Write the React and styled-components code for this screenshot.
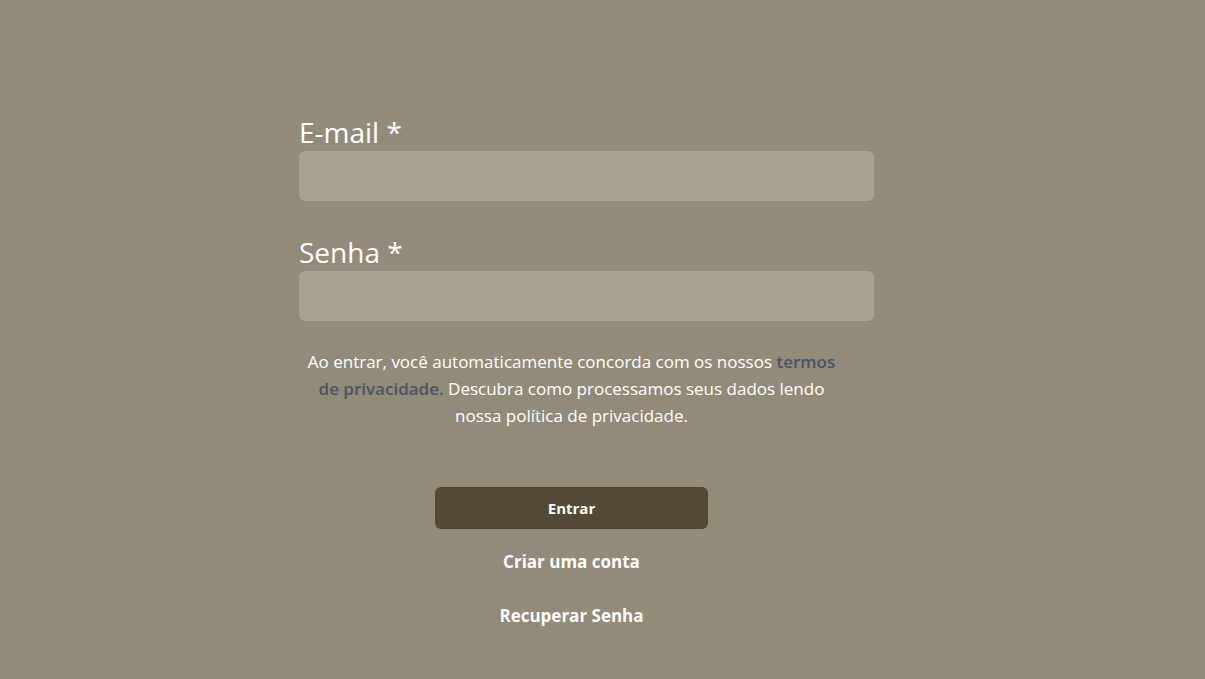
import styled, { createGlobalStyle } from 'styled-components';

const GlobalStyle = createGlobalStyle`
  html, body {
    margin: 0;
    padding: 0;
    background: #938b79;
  }
  * {
    box-sizing: border-box;
  }
`;

const Page = styled.div`
  min-height: 679px;
  background: #938b79;
  font-family: "Open Sans", "Noto Sans", sans-serif;
  color: #ffffff;
  padding-top: 113px;
`;

const Form = styled.form`
  width: 545px;
  margin: 0 auto 0 299px;
  display: flex;
  flex-direction: column;
`;

const Field = styled.div`
  display: flex;
  flex-direction: column;
  margin-bottom: ${({ $space }) => $space}px;
`;

const Label = styled.label`
  font-size: 28px;
  line-height: 38px;
  color: #ffffff;
`;

const Input = styled.input`
  width: 575px;
  height: 50px;
  border: none;
  border-radius: 6px;
  background: #a8a194;
  outline: none;
  padding: 0 14px;
  font-size: 16px;
  color: #fff;
`;

const Notice = styled.p`
  margin: 0;
  padding: 0 4px;
  text-align: center;
  font-size: 17px;
  line-height: 27px;
`;

const Link = styled.a`
  color: #4b5468;
  font-weight: 600;
  text-decoration: none;
`;

const Actions = styled.div`
  display: flex;
  flex-direction: column;
  align-items: center;
  margin-top: 58px;
`;

const Button = styled.button`
  width: 273px;
  height: 42px;
  border: none;
  border-radius: 6px;
  background: #524a35;
  color: #ffffff;
  font-family: inherit;
  font-weight: 700;
  font-size: 15px;
  cursor: pointer;
`;

const TextLink = styled.a`
  margin-top: ${({ $gap }) => $gap}px;
  font-weight: 700;
  font-size: 17px;
  line-height: 24px;
  color: #ffffff;
  text-decoration: none;
`;

export default function App() {
  return (
    <>
      <GlobalStyle />
      <Page>
        <Form onSubmit={(e) => e.preventDefault()}>
          <Field $space={32}>
            <Label>E-mail *</Label>
            <Input type="email" />
          </Field>
          <Field $space={27}>
            <Label>Senha *</Label>
            <Input type="password" />
          </Field>
          <Notice>
            Ao entrar, você automaticamente concorda com os nossos{' '}
            <Link href="#">termos de privacidade.</Link> Descubra como processamos seus dados lendo
            nossa política de privacidade.
          </Notice>
          <Actions>
            <Button type="submit">Entrar</Button>
            <TextLink href="#" $gap={21}>Criar uma conta</TextLink>
            <TextLink href="#" $gap={30}>Recuperar Senha</TextLink>
          </Actions>
        </Form>
      </Page>
    </>
  );
}
